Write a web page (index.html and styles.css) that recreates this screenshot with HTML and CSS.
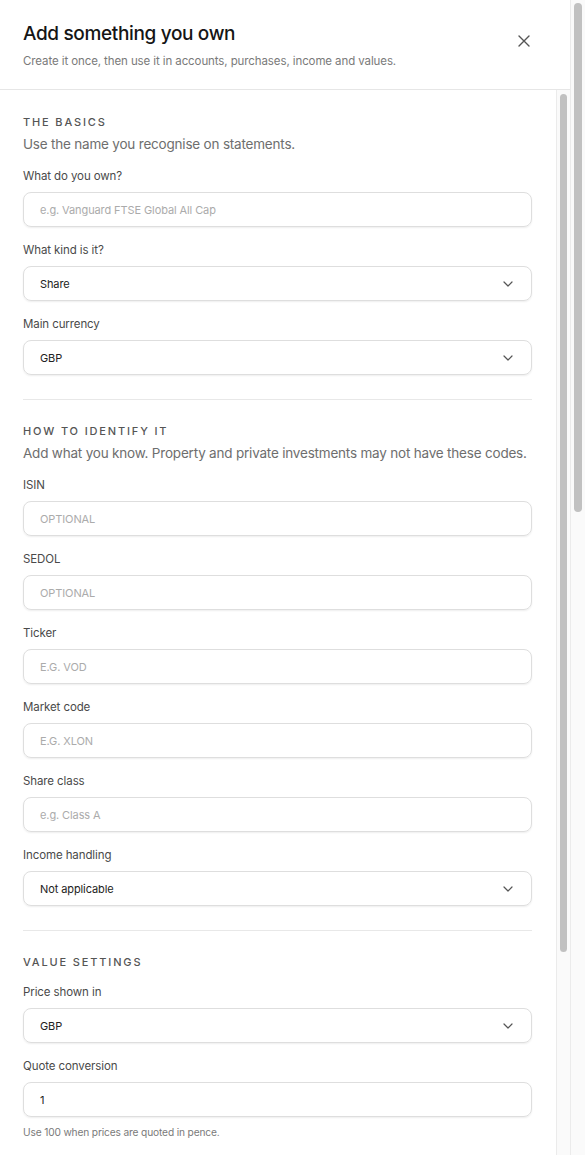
FILE: index.html
```html
<!DOCTYPE html>
<html lang="en">
<head>
<meta charset="utf-8">
<title>Add something you own</title>
<link rel="stylesheet" href="styles.css">
</head>
<body>
<aside class="sheet" role="dialog" aria-labelledby="sheet-title">
  <header class="sheet-head">
    <div class="head-text">
      <h1 id="sheet-title" class="title">Add something you own</h1>
      <p class="subtitle">Create it once, then use it in accounts, purchases, income and values.</p>
    </div>
    <button class="close" type="button" aria-label="Close">
      <svg width="12" height="12" viewBox="0 0 12 12"><path d="M1 1L11 11M11 1L1 11" stroke="#555" stroke-width="1.4" stroke-linecap="round" fill="none"/></svg>
    </button>
  </header>
  <div class="sheet-main">
    <div class="sheet-body">
      <section class="section first">
        <h2 class="sec-title">THE BASICS</h2>
        <p class="sec-desc">Use the name you recognise on statements.</p>
        <div class="fields">
          <label class="field"><span class="label">What do you own?</span><span class="box placeholder">e.g. Vanguard FTSE Global All Cap</span></label>
          <label class="field"><span class="label">What kind is it?</span><span class="box select">Share<svg class="chev" width="10" height="6" viewBox="0 0 10 6"><path d="M1 1L5 5L9 1" stroke="#555" stroke-width="1.2" fill="none" stroke-linecap="round" stroke-linejoin="round"/></svg></span></label>
          <label class="field"><span class="label">Main currency</span><span class="box select">GBP<svg class="chev" width="10" height="6" viewBox="0 0 10 6"><path d="M1 1L5 5L9 1" stroke="#555" stroke-width="1.2" fill="none" stroke-linecap="round" stroke-linejoin="round"/></svg></span></label>
        </div>
      </section>
      <section class="section">
        <h2 class="sec-title">HOW TO IDENTIFY IT</h2>
        <p class="sec-desc">Add what you know. Property and private investments may not have these codes.</p>
        <div class="fields">
          <label class="field"><span class="label">ISIN</span><span class="box placeholder">OPTIONAL</span></label>
          <label class="field"><span class="label">SEDOL</span><span class="box placeholder">OPTIONAL</span></label>
          <label class="field"><span class="label">Ticker</span><span class="box placeholder">E.G. VOD</span></label>
          <label class="field"><span class="label">Market code</span><span class="box placeholder">E.G. XLON</span></label>
          <label class="field"><span class="label">Share class</span><span class="box placeholder">e.g. Class A</span></label>
          <label class="field"><span class="label">Income handling</span><span class="box select">Not applicable<svg class="chev" width="10" height="6" viewBox="0 0 10 6"><path d="M1 1L5 5L9 1" stroke="#555" stroke-width="1.2" fill="none" stroke-linecap="round" stroke-linejoin="round"/></svg></span></label>
        </div>
      </section>
      <section class="section last">
        <h2 class="sec-title">VALUE SETTINGS</h2>
        <div class="fields tight">
          <label class="field"><span class="label">Price shown in</span><span class="box select">GBP<svg class="chev" width="10" height="6" viewBox="0 0 10 6"><path d="M1 1L5 5L9 1" stroke="#555" stroke-width="1.2" fill="none" stroke-linecap="round" stroke-linejoin="round"/></svg></span></label>
          <label class="field"><span class="label">Quote conversion</span><span class="box">1</span><span class="hint">Use 100 when prices are quoted in pence.</span></label>
        </div>
      </section>
    </div>
    <div class="scrollbar inner" aria-hidden="true"><span class="thumb"></span></div>
  </div>
</aside>
<div class="scrollbar outer" aria-hidden="true"><span class="thumb"></span></div>
</body>
</html>
```

FILE: styles.css
```css
html, body {
  margin: 0;
  padding: 0;
}
body {
  height: 100vh;
  overflow: hidden;
  display: flex;
  font-family: Inter, "Noto Sans", "Liberation Sans", sans-serif;
  background: #ffffff;
  color: #1a1a1a;
}
.sheet {
  flex: 1;
  min-width: 0;
  background: #ffffff;
  display: flex;
  flex-direction: column;
}
.sheet-head {
  flex: none;
  height: 90px;
  box-sizing: border-box;
  border-bottom: 1px solid #e6e6e6;
  padding: 21px 40px 0 23px;
  display: flex;
  justify-content: space-between;
  align-items: flex-start;
}
.title {
  margin: 0;
  font-size: 19px;
  line-height: 26px;
  font-weight: 500;
  letter-spacing: -0.35px;
  color: #151515;
}
.subtitle {
  margin: 6px 0 0;
  font-size: 11.5px;
  line-height: 16px;
  color: #7a7a7a;
  letter-spacing: -0.1px;
}
.close {
  margin-top: 14px;
  padding: 0;
  border: 0;
  background: none;
  width: 12px;
  height: 12px;
  display: flex;
}
.sheet-main {
  flex: 1;
  min-height: 0;
  display: flex;
}
.sheet-body {
  flex: 1;
  min-width: 0;
  overflow: hidden;
  padding: 0 24px 0 23px;
}
.section {
  padding: 24px 0;
  border-bottom: 1px solid #e8e8e8;
}
.section.first {
  padding-top: 25px;
}
.section.last {
  border-bottom: 0;
}
.sec-title {
  margin: 0;
  font-size: 11px;
  line-height: 14px;
  font-weight: 500;
  letter-spacing: 1.85px;
  color: #555;
}
.sec-desc {
  margin: 5px 0 0;
  font-size: 13.5px;
  line-height: 20px;
  color: #6e6e6e;
  letter-spacing: -0.2px;
}
.fields {
  margin-top: 13px;
  display: flex;
  flex-direction: column;
  gap: 14px;
}
.fields.tight {
  margin-top: 14px;
}
.field {
  display: flex;
  flex-direction: column;
}
.label {
  font-size: 11.5px;
  line-height: 18px;
  color: #4a4a4a;
  letter-spacing: -0.1px;
  margin-bottom: 7px;
}
.box {
  box-sizing: border-box;
  height: 35px;
  border: 1px solid #dedede;
  border-radius: 8px;
  box-shadow: 0 1px 2px rgba(0, 0, 0, 0.07);
  padding: 0 18px 0 16px;
  display: flex;
  align-items: center;
  justify-content: space-between;
  font-size: 11px;
  color: #222;
  letter-spacing: -0.1px;
}
.placeholder {
  color: #ababab;
}
.chev {
  flex: none;
}
.hint {
  margin-top: 7px;
  font-size: 10.2px;
  line-height: 16px;
  color: #7a7a7a;
  letter-spacing: -0.15px;
}
.scrollbar {
  flex: none;
  box-sizing: border-box;
  background: #fafafa;
  border-left: 1px solid #ebebeb;
  display: flex;
  flex-direction: column;
}
.scrollbar.inner {
  width: 14px;
  padding: 4px 0 0 3px;
}
.scrollbar.inner .thumb {
  width: 7px;
  height: 858px;
}
.scrollbar.outer {
  width: 15px;
  padding: 3px 0 0 3px;
}
.scrollbar.outer .thumb {
  width: 8px;
  height: 509px;
}
.thumb {
  display: block;
  background: #c1c1c1;
  border-radius: 4px;
}
```
